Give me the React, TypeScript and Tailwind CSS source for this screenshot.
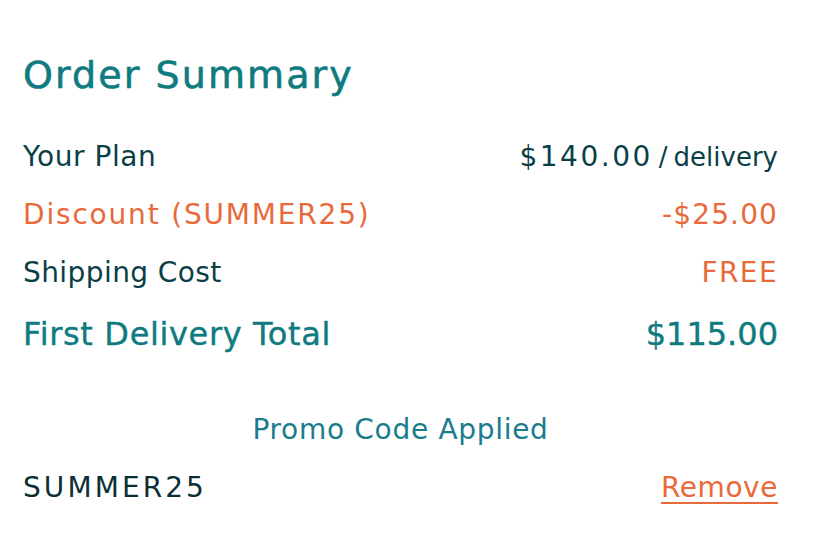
export default function App() {
  const font = { fontFamily: '"DejaVu Sans", Verdana, sans-serif' };
  return (
    <div className="w-[816px] h-[554px] bg-white" style={font}>
      <div className="pl-[23px] pr-[38px] pt-[50px]">
        <h1 className="text-[38px] leading-[50px] text-[#0f7b80] tracking-[0.055em] [-webkit-text-stroke:0.6px_#0f7b80]">Order Summary</h1>
        <div className="mt-[28px] flex flex-col text-[28px]">
          <div className="h-[58px] flex items-center justify-between text-[#0b3f47]">
            <span className="tracking-[0.02em]">Your Plan</span>
            <span className="flex items-baseline">
              <span className="tracking-[0.09em]">$140.00</span>
              <span className="mx-[6px] text-[26px]">/</span>
              <span className="text-[26px]">delivery</span>
            </span>
          </div>
          <div className="h-[58px] flex items-center justify-between text-[#e86a3a]">
            <span className="tracking-[0.065em]">Discount (SUMMER25)</span>
            <span className="tracking-[0.04em]">-$25.00</span>
          </div>
          <div className="h-[58px] flex items-center justify-between">
            <span className="text-[#0b3f47] tracking-[0.015em]">Shipping Cost</span>
            <span className="text-[#e86a3a] tracking-[0.05em]">FREE</span>
          </div>
          <div className="h-[64px] flex items-center justify-between text-[#0f7b80] text-[32px] [-webkit-text-stroke:0.4px_#0f7b80]">
            <span className="tracking-[0.02em]">First Delivery Total</span>
            <span>$115.00</span>
          </div>
        </div>
        <div className="mt-[36px] text-center text-[28px] leading-[56px] text-[#1a7c8c] tracking-[0.025em]">Promo Code Applied</div>
        <div className="flex items-center justify-between h-[60px] text-[28px]">
          <span className="text-[#0c2f36] tracking-[0.11em]">SUMMER25</span>
          <button className="text-[#e86a3a] tracking-[0.02em] underline underline-offset-[5px] decoration-2">Remove</button>
        </div>
      </div>
    </div>
  );
}
